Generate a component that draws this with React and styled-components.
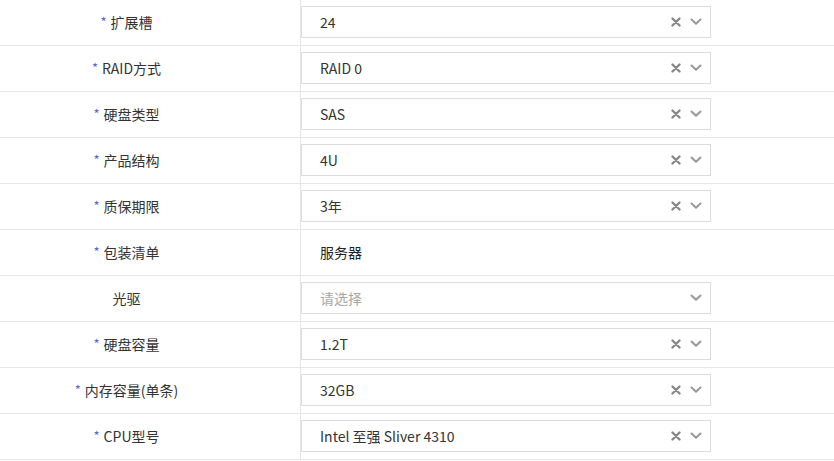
import React from "react";
import styled, { createGlobalStyle } from "styled-components";

const GlobalStyle = createGlobalStyle`
  body {
    margin: 0;
    background: #fff;
    font-family: "Noto Sans CJK SC", "Noto Sans", sans-serif;
  }
`;

const Form = styled.div`
  width: 834px;
`;

const Row = styled.div`
  display: grid;
  grid-template-columns: 301px 1fr;
  height: 45px;
  border-bottom: 1px solid #e6e6e6;
`;

const Label = styled.div`
  display: flex;
  align-items: center;
  justify-content: center;
  padding-right: 47px;
  padding-bottom: 2px;
  border-right: 1px solid #e6e6e6;
  font-size: 14px;
  color: #333;

  span {
    color: #5468e0;
    margin-right: 4px;
    font-size: 13px;
  }
`;

const Field = styled.div`
  display: flex;
  align-items: center;
  padding-bottom: 1px;
`;

const Select = styled.div`
  display: flex;
  align-items: center;
  width: 410px;
  height: 32px;
  box-sizing: border-box;
  border: 1px solid #dcdcdc;
  padding: 0 8px 1px 18px;
  font-size: 14px;
  color: ${({ $placeholder }) => ($placeholder ? "#a8a8a8" : "#333")};
`;

const Value = styled.div`
  flex: 1;
`;

const Plain = styled.div`
  padding-left: 19px;
  padding-bottom: 1px;
  font-size: 14px;
  color: #222;
`;

const Icons = styled.div`
  display: flex;
  align-items: center;
  gap: 9px;
`;

const ClearIcon = () => (
  <svg width="10" height="10" viewBox="0 0 10 10">
    <path d="M1.5 1.5 L8.5 8.5 M8.5 1.5 L1.5 8.5" stroke="#888" strokeWidth="2.4" strokeLinecap="round" />
  </svg>
);

const ChevronIcon = () => (
  <svg width="12" height="8" viewBox="0 0 12 8">
    <path d="M1.5 1.5 L6 5.8 L10.5 1.5" stroke="#999" strokeWidth="2" fill="none" strokeLinecap="round" strokeLinejoin="round" />
  </svg>
);

const rows = [
  { label: "扩展槽", value: "24", required: true },
  { label: "RAID方式", value: "RAID 0", required: true },
  { label: "硬盘类型", value: "SAS", required: true },
  { label: "产品结构", value: "4U", required: true },
  { label: "质保期限", value: "3年", required: true },
  { label: "包装清单", value: "服务器", required: true, plain: true },
  { label: "光驱", value: "请选择", placeholder: true },
  { label: "硬盘容量", value: "1.2T", required: true },
  { label: "内存容量(单条)", value: "32GB", required: true },
  { label: "CPU型号", value: "Intel 至强 Sliver 4310", required: true },
];

export default function App() {
  return (
    <>
      <GlobalStyle />
      <Form>
        {rows.map((r) => (
          <Row key={r.label}>
            <Label>
              {r.required && <span>*</span>}
              {r.label}
            </Label>
            <Field>
              {r.plain ? (
                <Plain>{r.value}</Plain>
              ) : (
                <Select $placeholder={r.placeholder}>
                  <Value>{r.value}</Value>
                  <Icons>
                    {!r.placeholder && <ClearIcon />}
                    <ChevronIcon />
                  </Icons>
                </Select>
              )}
            </Field>
          </Row>
        ))}
      </Form>
    </>
  );
}
